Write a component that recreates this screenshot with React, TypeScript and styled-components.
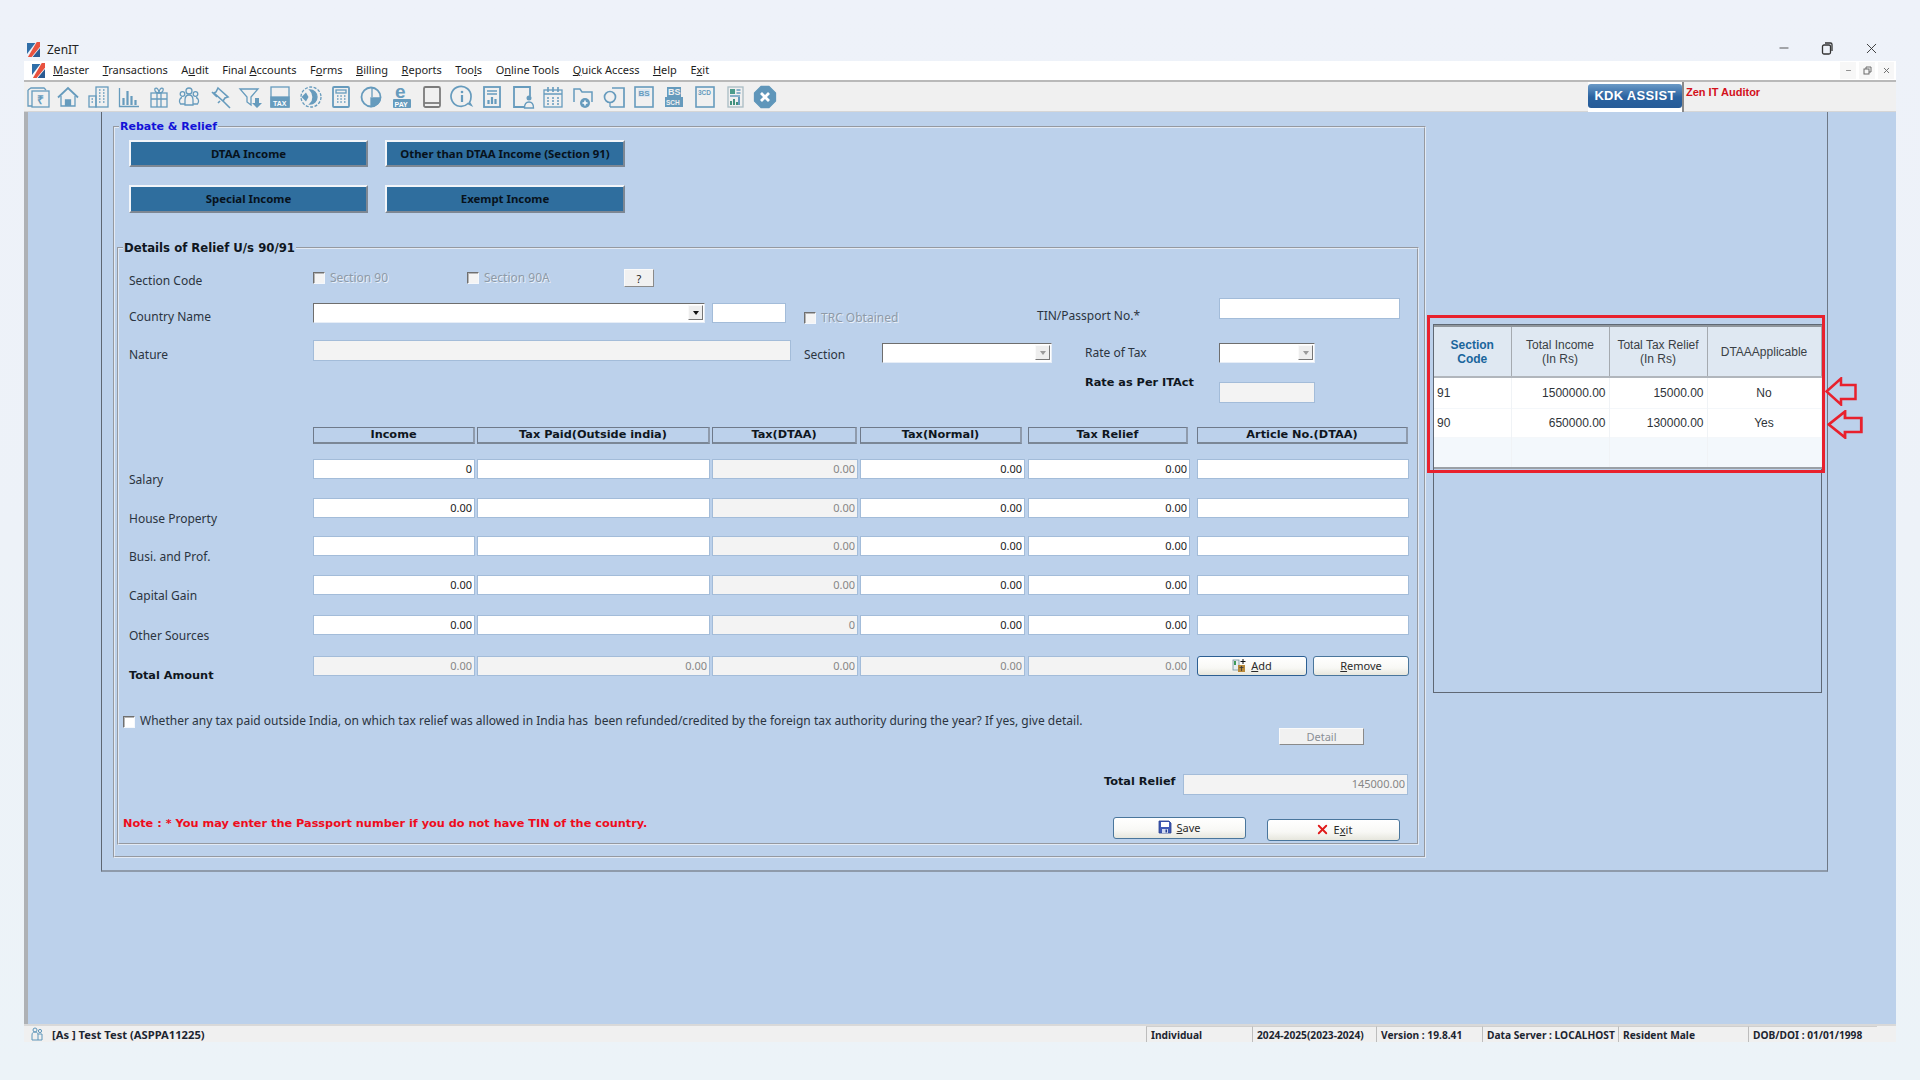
import React from 'react';
import styled, { createGlobalStyle } from 'styled-components';
import { Minus, X } from 'lucide-react';

const Global = createGlobalStyle`
  html, body { margin: 0; width: 1920px; height: 1080px; overflow: hidden; }
  body {
    background: linear-gradient(180deg, #eef2f9 0%, #edf2f8 50%, #ecf3f8 100%);
    font-family: "Noto Sans", "Liberation Sans", sans-serif;
    font-size: 12px;
    color: #2b3440;
  }
  * { box-sizing: border-box; }
`;

const boldFont = `"DejaVu Sans", "Noto Sans", sans-serif`;

const Win = styled.div`
  width: 1872px;
  margin-left: 24px;
  padding-top: 38px;
  display: flex;
  flex-direction: column;
`;
const TitleBar = styled.div`
  height: 23px;
  display: flex;
  align-items: center;
  padding-left: 3px;
  gap: 7px;
  font-size: 12px;
  color: #222;
`;
const WinControls = styled.div`
  margin-left: auto;
  margin-top: -3px;
  display: flex;
  align-items: center;
  gap: 30px;
  padding-right: 16px;
  color: #333;
`;
const MenuBar = styled.div`
  height: 21px;
  background: #fff;
  border-bottom: 2px solid #b9b9b9;
  display: flex;
  align-items: center;
  padding-left: 8px;
  font-size: 11px;
  color: #1d1d1d;
`;
const MenuList = styled.div`
  display: flex;
  gap: 13.5px;
  margin-left: 8px;
  padding-bottom: 2px;
`;
const MenuItem = styled.span`
  u { text-underline-offset: 1px; }
`;
const MdiControls = styled.div`
  margin-left: auto;
  display: flex;
  gap: 3px;
  padding-right: 2px;
`;
const MdiBtn = styled.span`
  width: 16px;
  height: 17px;
  background: #f7f7f7;
  display: flex;
  align-items: center;
  justify-content: center;
  color: #6a6a6a;
`;
const Toolbar = styled.div`
  height: 30px;
  background: #f0f0f0;
  border-bottom: 1px solid #d6d6d6;
  display: flex;
  padding-left: 2px;
`;
const ToolIcons = styled.div`
  display: flex;
  align-items: center;
  gap: 6.3px;
  flex: 1;
`;
const ToolIcon = styled.svg.attrs({ viewBox: '0 0 24 24', width: 24, height: 24 })`
  fill: none;
  stroke: #669bbd;
  stroke-width: 1.3;
  flex: none;
  text { stroke: none; font-family: "Liberation Sans", sans-serif; font-weight: 700; }
`;
const KdkWrap = styled.div`
  width: 96px;
  height: 30px;
  background: #fff;
  padding-top: 2px;
  border-right: 2px solid #8a8a8a;
`;
const Kdk = styled.div`
  width: 94px;
  height: 24px;
  border-radius: 3px;
  background: linear-gradient(180deg, #6b9ac6 0%, #2a62a0 55%, #275c98 100%);
  color: #fff;
  font: 700 13px/24px "Liberation Sans", sans-serif;
  letter-spacing: 0.3px;
  text-align: center;
`;
const Auditor = styled.div`
  width: 212px;
  padding: 3px 0 0 2px;
  color: #d3111b;
  font: 700 11px/14px "Liberation Sans", sans-serif;
`;

const Workspace = styled.div`
  height: 912px;
  background: #bcd1eb;
  border-left: 4px solid #aeb1b5;
  padding-left: 73px;
`;
const Panel = styled.div`
  width: 1727px;
  height: 760px;
  border-left: 1px solid #5d6672;
  border-right: 1px solid #6e7886;
  border-bottom: 2px solid #8e9aaa;
  display: flex;
  align-items: flex-start;
`;
const MainGroup = styled.fieldset`
  width: 1313px;
  height: 738px;
  margin: 8px 0 0 11px;
  padding: 6px 0 0 2px;
  border: 2px groove #e3eaf4;
  flex: none;
`;
const MainLegend = styled.legend`
  margin-left: 2px;
  padding: 0 1px;
  height: 14px;
  font: 700 11px/14px ${boldFont};
  color: #1212d8;
`;
const ActionRow = styled.div<{ $gap?: number }>`
  display: flex;
  gap: 17px;
  margin: ${p => p.$gap ?? 0}px 0 0 12px;
`;
const ActionBtn = styled.button<{ $w: number; $h: number }>`
  width: ${p => p.$w}px;
  height: ${p => p.$h}px;
  padding: 0 0 1px;
  background: #2f6e9e;
  border: 2px solid;
  border-color: #f2f5f9 #7d8793 #7d8793 #f2f5f9;
  color: #07121c;
  font: 700 11.4px "Noto Sans", sans-serif;
`;
const DetailsGroup = styled.fieldset`
  width: 1302px;
  height: 604px;
  margin: 28px 0 0 0;
  padding: 14px 0 0 4px;
  border: 2px groove #e3eaf4;
`;
const DetailsLegend = styled.legend`
  padding: 0 1px;
  height: 14px;
  font: 700 11.7px/14px ${boldFont};
  color: #0f1620;
`;
const FormRow = styled.div<{ $h: number }>`
  height: ${p => p.$h}px;
  margin-left: 6px;
  display: flex;
  align-items: flex-start;
`;
const Label = styled.div<{ $w: number; $top: number; $bold?: boolean }>`
  width: ${p => p.$w}px;
  flex: none;
  padding-top: ${p => p.$top}px;
  line-height: 14px;
  font-family: ${p => (p.$bold ? boldFont : 'inherit')};
  font-size: ${p => (p.$bold ? '11.3px' : '12px')};
  font-weight: ${p => (p.$bold ? 700 : 400)};
  color: ${p => (p.$bold ? '#0f1620' : '#2b3440')};
  white-space: nowrap;
`;
const CheckGroup = styled.div<{ $w: number; $top: number; $ml?: number; $off?: boolean }>`
  width: ${p => p.$w}px;
  margin: ${p => p.$top}px 0 0 ${p => p.$ml ?? 0}px;
  flex: none;
  display: flex;
  align-items: center;
  gap: 5px;
  line-height: 12px;
  white-space: nowrap;
  color: ${p => (p.$off ? '#8e9aa8' : '#2b3440')};
  text-shadow: ${p => (p.$off ? '1px 1px 0 #e9f0f9' : 'none')};
`;
const Check = styled.span`
  width: 12px;
  height: 12px;
  flex: none;
  background: #f4f4f4;
  border: 1px solid;
  border-color: #6f6f6f #f5f8fc #f5f8fc #6f6f6f;
  box-shadow: inset 1px 1px 0 #b5b5b5;
`;
const SmallBtn = styled.button<{ $w: number; $h: number; $off?: boolean }>`
  width: ${p => p.$w}px;
  height: ${p => p.$h}px;
  padding: 0;
  background: #f1f1f1;
  border: 1px solid;
  border-color: #fafafa #8a8a8a #8a8a8a #fafafa;
  color: ${p => (p.$off ? '#8a8f96' : '#222')};
  font: 400 11px "Noto Sans", sans-serif;
  u { text-underline-offset: 1px; }
`;
const Field = styled.input<{ $w: number; $h?: number; $mt?: number; $ml?: number; $off?: boolean }>`
  width: ${p => p.$w}px;
  height: ${p => p.$h ?? 20}px;
  margin: ${p => p.$mt ?? 0}px 0 0 ${p => p.$ml ?? 0}px;
  flex: none;
  padding: 0 2px 2px 2px;
  display: block;
  background: ${p => (p.$off ? '#f3f3f3' : '#fff')};
  border: 1.5px solid #a3bcd9;
  outline: none;
  color: ${p => (p.$off ? '#868686' : '#1a1a1a')};
  font: 400 11px "Noto Sans", sans-serif;
  text-align: right;
`;
const Combo = styled.div<{ $w: number; $mt: number; $ml?: number; $off?: boolean }>`
  width: ${p => p.$w}px;
  height: 20px;
  margin: ${p => p.$mt}px 0 0 ${p => p.$ml ?? 0}px;
  flex: none;
  background: #fff;
  border: 1.5px solid;
  border-color: #6e6e6e #e7eef7 #e7eef7 #6e6e6e;
  display: flex;
  justify-content: flex-end;
  padding: 1px 0 1px;
`;
const ComboArrow = styled.span<{ $off?: boolean }>`
  width: 15px;
  height: 15px;
  margin-right: 1px;
  background: #eeeeee;
  border: 1px solid;
  border-color: #fafafa #777 #777 #fafafa;
  display: flex;
  align-items: center;
  justify-content: center;
  &::before {
    content: '';
    border-left: 3.5px solid transparent;
    border-right: 3.5px solid transparent;
    border-top: 4px solid ${p => (p.$off ? '#9a9a9a' : '#111')};
  }
`;
const AmountGrid = styled.div`
  margin-left: 6px;
  display: grid;
  grid-template-columns: 184px 164px 235px 148px 168px 169px 212px;
  grid-template-rows: 32px 39px 38px 39px 40px 41px 34px;
`;
const ColHead = styled.div<{ $w: number }>`
  width: ${p => p.$w}px;
  height: 17px;
  border-style: solid;
  border-color: #6f7a8a #8f9bac #7b8796 #6f7a8a;
  border-width: 1px 2px 2px 1px;
  font: 700 11.3px/14px ${boldFont};
  text-align: center;
  color: #0f1620;
  white-space: nowrap;
`;
const ButtonPair = styled.div`
  display: flex;
  gap: 6px;
  align-items: flex-start;
`;
const FaceBtn = styled.button<{ $w: number; $h?: number; $mt?: number; $ml?: number; $focus?: boolean }>`
  width: ${p => p.$w}px;
  height: ${p => p.$h ?? 20}px;
  margin: ${p => p.$mt ?? 0}px 0 0 ${p => p.$ml ?? 0}px;
  flex: none;
  padding: 0 0 2px;
  display: flex;
  align-items: center;
  justify-content: center;
  gap: 4px;
  background: linear-gradient(180deg, #ffffff 0%, #f8f8f5 60%, #e6e6dd 100%);
  border: ${p => (p.$focus ? '1.5px solid #2c5f93' : '1.5px solid #4a769c')};
  border-radius: 3px;
  color: #2b2b2b;
  font: 400 11px "Noto Sans", sans-serif;
  u { text-underline-offset: 1px; }
`;
const WhetherRow = styled.div`
  height: 13px;
  margin-top: 25px;
  display: flex;
  align-items: center;
  gap: 5px;
  font-size: 12px;
  white-space: nowrap;
  span:last-child { position: relative; top: -1px; letter-spacing: 0.013px; }
`;
const WhiteCheck = styled(Check)`
  background: #fff;
`;
const DetailRow = styled.div`
  height: 17px;
  margin-left: 1156px;
`;
const RightAlignRow = styled.div`
  height: 21px;
  margin-top: 29px;
  margin-left: 981px;
  display: flex;
`;
const BottomRow = styled.div`
  margin-top: 22px;
  display: flex;
  align-items: flex-start;
`;
const Note = styled.div`
  width: 990px;
  flex: none;
  color: #ee0c1c;
  font: 700 11.3px/13px ${boldFont};
  white-space: nowrap;
`;
const RightFrame = styled.div`
  position: relative;
  width: 389px;
  height: 369px;
  margin: 212px 0 0 7px;
  flex: none;
  border: 1px solid #5f6874;
`;
const Grid = styled.table`
  width: 100%;
  table-layout: fixed;
  border-collapse: collapse;
  font: 400 12px "Liberation Sans", sans-serif;
  color: #2e3338;
  border-bottom: 2px solid #9aa0a6;
`;
const Th = styled.th<{ $w: number; $key?: boolean }>`
  width: ${p => p.$w}px;
  height: 51px;
  padding: 0 2px;
  background: #dfe8f2;
  border-top: 2px solid #90969c;
  border-bottom: 2px solid #b1b6bc;
  border-right: 1px solid #a5aab0;
  font-weight: ${p => (p.$key ? 700 : 400)};
  color: ${p => (p.$key ? '#1a659c' : '#3a3f45')};
  line-height: 14px;
`;
const Tr = styled.tr<{ $h: number; $alt?: boolean }>`
  height: ${p => p.$h}px;
  background: ${p => (p.$alt ? '#f3f8fc' : '#fff')};
  border-bottom: 1px solid #f4f7fa;
`;
const Td = styled.td<{ $align?: string }>`
  padding: 0 3px;
  text-align: ${p => p.$align ?? 'left'};
  border-right: 1px solid #f0f3f6;
`;
const Callout = styled.div`
  position: absolute;
  left: -7px;
  top: -10px;
  width: 398px;
  height: 158px;
  border: 3px solid #e8212d;
  pointer-events: none;
`;
const Arrow = styled.svg.attrs({ viewBox: '0 0 32 29', preserveAspectRatio: 'none' })<{ $left: number; $top: number; $w: number }>`
  position: absolute;
  left: ${p => p.$left}px;
  top: ${p => p.$top}px;
  width: ${p => p.$w}px;
  height: 29px;
  fill: none;
  stroke: #e8212d;
  stroke-width: 2.5;
`;
const StatusBar = styled.div`
  height: 18px;
  background: #f0f0f0;
  border-top: 2px solid #d9d9d9;
  display: flex;
  font: 700 10.2px/16px "Noto Sans", sans-serif;
  color: #1d2530;
`;
const StatusUser = styled.div`
  width: 1122px;
  flex: none;
  display: flex;
  align-items: center;
  gap: 8px;
  padding-left: 6px;
  font-size: 11.2px;
  span { position: relative; top: 1px; }
`;
const StatusCell = styled.div<{ $w: number }>`
  width: ${p => p.$w}px;
  flex: none;
  padding-left: 4px;
  border-left: 1.5px solid #bdbdbd;
  border-top: 1px solid #cfcfcf;
  white-space: nowrap;
`;

const Logo = ({ s }: { s: number }) => (
  <svg width={s} height={s * 1.15} viewBox="0 0 14 16">
    <path d="M0 1h9L0 13z" fill="#2f6ea8" />
    <path d="M10.5 0H14v5L5 16H1z" fill="#e8523f" />
    <path d="M14 6.5V16H6z" fill="#2b5b92" />
  </svg>
);

const Restore = () => (
  <svg width="12" height="14" viewBox="0 0 12 14" fill="none" stroke="#333" strokeWidth="1.3">
    <rect x="1.5" y="4" width="8" height="9" rx="1.5" />
    <path d="M4 2h5.5A1.5 1.5 0 0 1 11 3.5V10" />
  </svg>
);

const c = '#669bbd';
const tx = { fill: c };
const icons: React.ReactNode[] = [
  <><path d="M2 5v16h4" /><path d="M2 5l3-2h13l2 2" /><rect x="6" y="6" width="17" height="16" /><text x="10.5" y="19" fontSize="12" {...tx}>₹</text></>,
  <><path d="M2 12.5 12 3l10 9.5" strokeWidth="1.8" /><path d="M5 11v10h14V11" /><path d="M9.5 21v-6h5v6" fill={c} /></>,
  <><rect x="9" y="2" width="12" height="20" /><rect x="2" y="11" width="7" height="11" /><path d="M12 5h1.5M16 5h1.5M12 8h1.5M16 8h1.5M12 11h1.5M16 11h1.5M12 14h1.5M16 14h1.5M12 17h1.5M16 17h1.5M4.5 14H6M4.5 17H6" strokeWidth="1.6" /></>,
  <><path d="M2.5 3v18.5H22" /><path d="M6.5 20v-7M10.5 20V6M14.5 20v-9M18.5 20v-5" strokeWidth="2.2" /></>,
  <><rect x="4" y="8" width="16" height="14" /><path d="M4 14h16M10 8v14M14 8v14" /><path d="M12 8C9 8 7 6 8 3.500c1.500-1.500 4 1 4 4.500 0-3.500 2.500-6 4-4.500C17 6 15 8 12 8z" /></>,
  <><circle cx="12" cy="6" r="3" /><circle cx="5.500" cy="9" r="2.300" /><circle cx="18.500" cy="9" r="2.300" /><path d="M8 20v-5c0-3 1.500-5 4-5s4 2 4 5v5zM8 19H3.500c-2-2-1-6 1.500-6.500M16 19h4.500c2-2 1-6-1.500-6.500" /></>,
  <><path d="M10 3l10 9-3 1-2 3-9-8 2-1zM9 12l-5-5M12 16l-2 2M15 16l7 7" strokeWidth="1.6" /></>,
  <><path d="M2 4h18l-7 8v8l-4-3v-5z" /><path d="M17 13v5h-3l5 5 5-5h-3v-5z" fill={c} stroke="none" /></>,
  <><rect x="3" y="2" width="18" height="20" /><rect x="3" y="12" width="18" height="10" fill={c} /><text x="5" y="20.500" fontSize="7" fill="#fff">TAX</text></>,
  <><circle cx="12" cy="12" r="10" strokeDasharray="3 1.500" /><path d="M11 5a7 7 0 0 1 0 14 9 9 0 0 0 3-7 9 9 0 0 0-3-7z" fill={c} /><path d="M2.500 12 7 7.500 9.500 12 7 16.500z" fill={c} stroke="none" /></>,
  <><rect x="4" y="2" width="16" height="20" rx="1" strokeWidth="1.800" /><rect x="7" y="5" width="10" height="3" /><path d="M8 11h1.500M11.300 11h1.500M15 11h1.500M8 14h1.500M11.300 14h1.500M15 14h1.500M8 17h1.500M11.300 17h1.500M15 17h1.500" strokeWidth="1.700" /></>,
  <><circle cx="12" cy="12" r="9.500" strokeWidth="1.800" /><path d="M12 13h9.500a9.500 9.500 0 0 1-9.500 8.500z" fill={c} /><path d="M13 12V2.500" /></>,
  <><text x="5" y="13" fontSize="19" {...tx}>e</text><rect x="3" y="14" width="18" height="9" rx="1" fill={c} stroke="none" /><text x="4.500" y="21.500" fontSize="7" fill="#fff">PAY</text></>,
  <g stroke="#7c7c7c" strokeWidth="1.800"><rect x="4" y="2" width="16" height="20" rx="1.500" /><path d="M4 18h16" /></g>,
  <><path d="M21 20l-3-1.500A10 10 0 1 1 21 12c0 2-.5 4-1.500 5.500z" strokeWidth="1.700" /><circle cx="12" cy="7" r="1.300" fill={c} stroke="none" /><path d="M12 10v7" strokeWidth="2.200" /></>,
  <><rect x="4" y="2" width="16" height="20" strokeWidth="1.800" /><path d="M7 6h10M7 9h10" /><path d="M8.500 19v-4M12 19v-7M15.500 19v-5" strokeWidth="2.200" /></>,
  <><path d="M14 22H3V2h16v9" strokeWidth="1.800" /><circle cx="18" cy="13" r="2.500" fill={c} stroke="none" /><path d="M13.500 23c0-4 2-6 4.500-6s4.500 2 4.500 6z" /></>,
  <><rect x="3" y="5" width="18" height="17" /><path d="M7 2v5M12 2v5M17 2v5M3 9h18" strokeWidth="1.600" /><path d="M6 13h2M11 13h2M16 13h2M6 16h2M11 16h2M16 16h2M6 19h2M11 19h2M16 19h2" strokeWidth="1.600" /></>,
  <><path d="M3 17V4h6l2 3h10v10" strokeWidth="1.500" /><circle cx="14" cy="18" r="5" fill={c} stroke="none" /><path d="M14 15.500v5M11.500 18h5" stroke="#fff" strokeWidth="1.500" /></>,
  <><path d="M10 3h12v19H8" strokeWidth="1.700" /><circle cx="8" cy="12" r="5.500" strokeWidth="1.700" /><path d="M8 17.500V22" /></>,
  <><rect x="3" y="2" width="18" height="20" strokeWidth="1.600" /><rect x="6" y="4" width="12" height="8" fill="#dbe7f1" stroke="none" /><text x="6.500" y="11" fontSize="8" {...tx}>BS</text></>,
  <><path d="M5 2h14v10h2v10H3V12h2z" fill={c} stroke="none" /><text x="6" y="10" fontSize="9" fill="#f0f0f0">BS</text><text x="4" y="20" fontSize="6.500" fill="#f0f0f0">SCH</text></>,
  <><rect x="3" y="2" width="18" height="20" strokeWidth="1.600" /><text x="5" y="10" fontSize="6.500" {...tx}>3CD</text></>,
  <><rect x="5" y="2" width="15" height="20" stroke="#a9bcc4" /><rect x="7" y="4" width="5" height="5" fill="#4c9c8c" stroke="none" /><path d="M13.500 5h4M13.500 8h4M7 11h10" /><path d="M8 20v-4M11 20v-6M14 20v-3" stroke="#43927f" strokeWidth="2" /><path d="M16 12v8" strokeWidth="2" /></>,
  <><path d="M8 1.500h8L22.500 8v8L16 22.500H8L1.500 16V8z" fill="#5f96ba" stroke="#5f96ba" strokeLinejoin="round" /><path d="M8 8l8 8M16 8l-8 8" stroke="#fff" strokeWidth="2.800" /></>,
];

const menu: [string, string, string][] = [
  ['', 'M', 'aster'], ['', 'T', 'ransactions'], ['A', 'u', 'dit'], ['Final ', 'A', 'ccounts'],
  ['F', 'o', 'rms'], ['', 'B', 'illing'], ['', 'R', 'eports'], ['Too', 'l', 's'],
  ['O', 'n', 'line Tools'], ['', 'Q', 'uick Access'], ['', 'H', 'elp'], ['E', 'x', 'it'],
];

const colW = [162, 233, 146, 165, 162, 212];
const headW = [162, 233, 145, 162, 160, 211];
const heads = ['Income', 'Tax Paid(Outside india)', 'Tax(DTAA)', 'Tax(Normal)', 'Tax Relief', 'Article No.(DTAA)'];
const rows: { label: string; v: string[] }[] = [
  { label: 'Salary', v: ['0', '', '0.00', '0.00', '0.00', ''] },
  { label: 'House Property', v: ['0.00', '', '0.00', '0.00', '0.00', ''] },
  { label: 'Busi. and Prof.', v: ['', '', '0.00', '0.00', '0.00', ''] },
  { label: 'Capital Gain', v: ['0.00', '', '0.00', '0.00', '0.00', ''] },
  { label: 'Other Sources', v: ['0.00', '', '0', '0.00', '0.00', ''] },
];
const totals = ['0.00', '0.00', '0.00', '0.00', '0.00'];

const Arrowhead = () => <path d="M1.500 14.500 16 1.500V8h14.500v14H16v5.500z" />;

export default function App() {
  return (
    <>
      <Global />
      <Win>
        <TitleBar>
          <Logo s={13} />
          <span>ZenIT</span>
          <WinControls>
            <Minus size={14} strokeWidth={1.4} />
            <Restore />
            <X size={17} strokeWidth={1.3} />
          </WinControls>
        </TitleBar>
        <MenuBar>
          <Logo s={13} />
          <MenuList>
            {menu.map(([a, b, d]) => (
              <MenuItem key={a + b + d}>{a}<u>{b}</u>{d}</MenuItem>
            ))}
          </MenuList>
          <MdiControls>
            <MdiBtn><Minus size={7} strokeWidth={2.5} /></MdiBtn>
            <MdiBtn>
              <svg width="9" height="9" viewBox="0 0 9 9" fill="none" stroke="#6a6a6a"><rect x="1" y="3" width="5" height="5" /><path d="M3 3V1h5v5H6" /></svg>
            </MdiBtn>
            <MdiBtn><X size={9} strokeWidth={2.5} /></MdiBtn>
          </MdiControls>
        </MenuBar>
        <Toolbar>
          <ToolIcons>
            {icons.map((ic, i) => <ToolIcon key={i}>{ic}</ToolIcon>)}
          </ToolIcons>
          <KdkWrap><Kdk>KDK ASSIST</Kdk></KdkWrap>
          <Auditor>Zen IT Auditor</Auditor>
        </Toolbar>
        <Workspace>
          <Panel>
            <MainGroup>
              <MainLegend>Rebate &amp; Relief</MainLegend>
              <ActionRow>
                <ActionBtn $w={239} $h={27}>DTAA Income</ActionBtn>
                <ActionBtn $w={240} $h={27}>Other than DTAA Income (Section 91)</ActionBtn>
              </ActionRow>
              <ActionRow $gap={18}>
                <ActionBtn $w={239} $h={28}>Special Income</ActionBtn>
                <ActionBtn $w={240} $h={28}>Exempt Income</ActionBtn>
              </ActionRow>
              <DetailsGroup>
                <DetailsLegend>Details of Relief U/s 90/91</DetailsLegend>
                <FormRow $h={29}>
                  <Label $w={184} $top={5}>Section Code</Label>
                  <CheckGroup $w={154} $top={3} $off><Check />Section 90</CheckGroup>
                  <CheckGroup $w={157} $top={3} $off><Check />Section 90A</CheckGroup>
                  <SmallBtn $w={30} $h={18}>?</SmallBtn>
                </FormRow>
                <FormRow $h={42}>
                  <Label $w={184} $top={12}>Country Name</Label>
                  <Combo $w={392} $mt={5}><ComboArrow /></Combo>
                  <Field $w={74} $mt={5} $ml={7} readOnly />
                  <CheckGroup $w={233} $top={14} $ml={18} $off><Check />TRC Obtained</CheckGroup>
                  <Label $w={182} $top={11}>TIN/Passport No.*</Label>
                  <Field $w={181} $h={21} readOnly />
                </FormRow>
                <FormRow $h={36}>
                  <Label $w={184} $top={8}>Nature</Label>
                  <Field $w={478} $h={21} $off readOnly />
                  <Label $w={91} $top={8} style={{ paddingLeft: 13 }}>Section</Label>
                  <Combo $w={170} $mt={3}><ComboArrow $off /></Combo>
                  <Label $w={167} $top={6} style={{ paddingLeft: 33 }}>Rate of Tax</Label>
                  <Combo $w={96} $mt={3}><ComboArrow $off /></Combo>
                </FormRow>
                <FormRow $h={51}>
                  <Label $w={1090} $top={0} $bold style={{ paddingLeft: 956 }}>Rate as Per ITAct</Label>
                  <Field $w={96} $h={21} $mt={6} $off readOnly />
                </FormRow>
                <AmountGrid>
                  <span />
                  {heads.map((h, i) => <ColHead key={h} $w={headW[i]}>{h}</ColHead>)}
                  {rows.map(r => (
                    <React.Fragment key={r.label}>
                      <Label $w={184} $top={14}>{r.label}</Label>
                      {r.v.map((val, i) => (
                        <Field key={i} $w={colW[i]} $off={i === 2} value={val} readOnly />
                      ))}
                    </React.Fragment>
                  ))}
                  <Label $w={184} $top={13} $bold>Total Amount</Label>
                  {totals.map((val, i) => <Field key={i} $w={colW[i]} $off value={val} readOnly />)}
                  <ButtonPair>
                    <FaceBtn $w={110} $focus>
                      <svg width="15" height="15" viewBox="0 0 15 15">
                        <rect x="1" y="2" width="6" height="10" fill="#e8eef2" stroke="#6f8f9f" strokeWidth=".8" />
                        <rect x="2" y="3" width="2" height="4" fill="#3d9a5a" />
                        <rect x="6" y="7" width="7" height="7" fill="#b98a3a" />
                        <path d="M7.500 9.500h4M9.500 8v5" stroke="#33373b" strokeWidth=".8" />
                        <path d="M11 1v5M8.500 3.500h5" stroke="#111" strokeWidth="1" />
                      </svg>
                      <span><u>A</u>dd</span>
                    </FaceBtn>
                    <FaceBtn $w={96}><span><u>R</u>emove</span></FaceBtn>
                  </ButtonPair>
                </AmountGrid>
                <WhetherRow>
                  <WhiteCheck />
                  <span>Whether any tax paid outside India, on which tax relief was allowed in India has&nbsp; been refunded/credited by the foreign tax authority during the year? If yes, give detail.</span>
                </WhetherRow>
                <DetailRow><SmallBtn $w={85} $h={17} $off>Detail</SmallBtn></DetailRow>
                <RightAlignRow>
                  <Label $w={79} $top={1} $bold>Total Relief</Label>
                  <Field $w={225} $h={21} $off value="145000.00" readOnly />
                </RightAlignRow>
                <BottomRow>
                  <Note>Note : * You may enter the Passport number if you do not have TIN of the country.</Note>
                  <FaceBtn $w={133} $h={22}>
                    <svg width="14" height="14" viewBox="0 0 14 14">
                      <path d="M1 1h10l2 2v10H1z" fill="#3f59b5" stroke="#27408f" strokeWidth=".8" />
                      <rect x="3" y="2" width="8" height="5" fill="#fff" />
                      <rect x="4" y="9" width="6" height="4" fill="#cfd8ef" />
                      <rect x="7.500" y="9.500" width="1.500" height="3" fill="#27408f" />
                    </svg>
                    <span><u>S</u>ave</span>
                  </FaceBtn>
                  <FaceBtn $w={133} $h={22} $mt={2} $ml={21}>
                    <X size={15} strokeWidth={3} color="#e01a1a" />
                    <span>E<u>x</u>it</span>
                  </FaceBtn>
                </BottomRow>
              </DetailsGroup>
            </MainGroup>
            <RightFrame>
              <Grid>
                <thead>
                  <tr>
                    <Th $w={77} $key>Section<br />Code</Th>
                    <Th $w={98}>Total Income<br />(In Rs)</Th>
                    <Th $w={98}>Total Tax Relief<br />(In Rs)</Th>
                    <Th $w={114}>DTAAApplicable</Th>
                  </tr>
                </thead>
                <tbody>
                  <Tr $h={31}><Td>91</Td><Td $align="right">1500000.00</Td><Td $align="right">15000.00</Td><Td $align="center">No</Td></Tr>
                  <Tr $h={29}><Td>90</Td><Td $align="right">650000.00</Td><Td $align="right">130000.00</Td><Td $align="center">Yes</Td></Tr>
                  <Tr $h={31} $alt><Td /><Td /><Td /><Td /></Tr>
                </tbody>
              </Grid>
              <Callout />
              <Arrow $left={391} $top={52} $w={32}><Arrowhead /></Arrow>
              <Arrow $left={393} $top={85} $w={36}><Arrowhead /></Arrow>
            </RightFrame>
          </Panel>
        </Workspace>
        <StatusBar>
          <StatusUser>
            <svg width="14" height="14" viewBox="0 0 14 14" fill="none" stroke="#5f96ba" strokeWidth="1">
              <circle cx="5" cy="3" r="2" /><circle cx="10" cy="4" r="1.600" />
              <path d="M2 13V8c0-2 1-3 3-3s3 1 3 3v5zM8 7h4v6H8" />
            </svg>
            <span>[As ] Test Test (ASPPA11225)</span>
          </StatusUser>
          <StatusCell $w={106}>Individual</StatusCell>
          <StatusCell $w={124}>2024-2025(2023-2024)</StatusCell>
          <StatusCell $w={106}>Version : 19.8.41</StatusCell>
          <StatusCell $w={136}>Data Server : LOCALHOST</StatusCell>
          <StatusCell $w={130}>Resident Male</StatusCell>
          <StatusCell $w={129}>DOB/DOI : 01/01/1998</StatusCell>
        </StatusBar>
      </Win>
    </>
  );
}
